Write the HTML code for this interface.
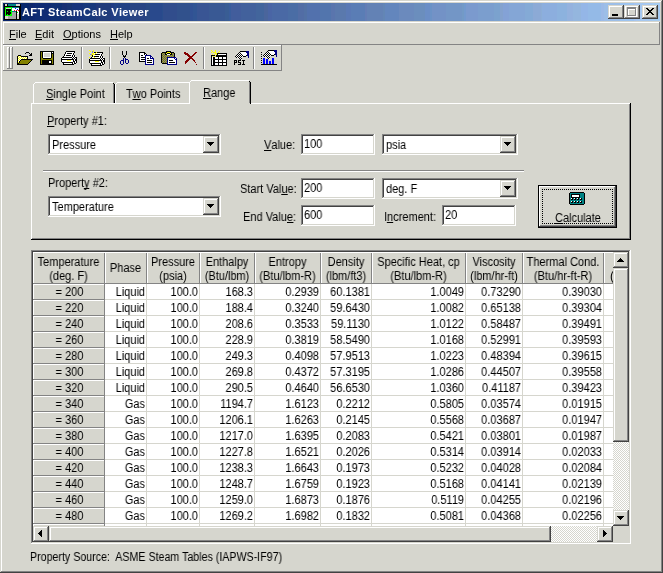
<!DOCTYPE html>
<html><head><meta charset="utf-8"><title>AFT SteamCalc Viewer</title>
<style>
html,body{margin:0;padding:0;width:663px;height:573px;overflow:hidden;background:#D6D6CE;}
body{position:relative;font-family:"Liberation Sans",sans-serif;font-size:11px;color:#000;}
div{position:absolute;box-sizing:border-box;}
.t{white-space:nowrap;line-height:13px;font-size:12px;transform:scaleX(0.917);transform-origin:0 0;}
.m{white-space:nowrap;line-height:13px;font-size:11px;}
.b{font-weight:bold;}
u{text-decoration:none;border-bottom:1px solid #000;display:inline-block;line-height:10px;}
svg{position:absolute;shape-rendering:crispEdges;}
.t,.m{will-change:transform;}
</style></head><body>

<div style="left:1px;top:1px;width:660px;height:1px;background:#FFFFFF;"></div>
<div style="left:1px;top:1px;width:1px;height:570px;background:#FFFFFF;"></div>
<div style="left:661px;top:1px;width:1px;height:571px;background:#848484;"></div>
<div style="left:1px;top:571px;width:661px;height:1px;background:#848484;"></div>
<div style="left:662px;top:0px;width:1px;height:573px;background:#424242;"></div>
<div style="left:0px;top:572px;width:663px;height:1px;background:#424242;"></div>
<div style="left:3px;top:3px;width:657px;height:18px;background:linear-gradient(to right,#08246B 0px,#08246B 16px,#08286B 16px,#08286B 26px,#10286B 26px,#10286B 30px,#102873 30px,#102873 32px,#102C73 32px,#102C73 48px,#103073 48px,#103073 59px,#183073 59px,#183073 64px,#183473 64px,#183473 69px,#18347B 69px,#18347B 80px,#18387B 80px,#18387B 93px,#21387B 93px,#21387B 95px,#213C7B 95px,#213C7B 108px,#213C84 108px,#213C84 111px,#214184 111px,#214184 127px,#294584 127px,#294584 143px,#294984 143px,#294984 147px,#29498C 147px,#29498C 159px,#294D8C 159px,#294D8C 160px,#314D8C 160px,#314D8C 174px,#31518C 174px,#31518C 187px,#315194 187px,#315194 190px,#315594 190px,#315594 194px,#395594 194px,#395594 206px,#395994 206px,#395994 222px,#395D94 222px,#395D94 226px,#395D9C 226px,#395D9C 228px,#425D9C 228px,#425D9C 238px,#42619C 238px,#42619C 253px,#42659C 253px,#42659C 261px,#4A659C 261px,#4A659C 265px,#4A65A5 265px,#4A65A5 269px,#4A69A5 269px,#4A69A5 285px,#4A6DA5 285px,#4A6DA5 295px,#526DA5 295px,#526DA5 301px,#5271A5 301px,#5271A5 304px,#5271AD 304px,#5271AD 317px,#5275AD 317px,#5275AD 328px,#5A75AD 328px,#5A75AD 332px,#5A79AD 332px,#5A79AD 343px,#5A79B5 343px,#5A79B5 348px,#5A7DB5 348px,#5A7DB5 362px,#637DB5 362px,#637DB5 364px,#6382B5 364px,#6382B5 380px,#6386B5 380px,#6386B5 382px,#6386BD 382px,#6386BD 396px,#6B8ABD 396px,#6B8ABD 411px,#6B8EBD 411px,#6B8EBD 422px,#6B8EC6 422px,#6B8EC6 427px,#6B92C6 427px,#6B92C6 429px,#7392C6 429px,#7392C6 443px,#7396C6 443px,#7396C6 459px,#739AC6 459px,#739AC6 461px,#739ACE 461px,#739ACE 463px,#7B9ACE 463px,#7B9ACE 475px,#7B9ECE 475px,#7B9ECE 491px,#7BA2CE 491px,#7BA2CE 497px,#84A2CE 497px,#84A2CE 500px,#84A2D6 500px,#84A2D6 506px,#84A6D6 506px,#84A6D6 522px,#84AAD6 522px,#84AAD6 530px,#8CAAD6 530px,#8CAAD6 538px,#8CAED6 538px,#8CAED6 539px,#8CAEDE 539px,#8CAEDE 554px,#8CB2DE 554px,#8CB2DE 564px,#94B2DE 564px,#94B2DE 570px,#94B6DE 570px,#94B6DE 578px,#94B6E7 578px,#94B6E7 585px,#94BAE7 585px,#94BAE7 598px,#9CBAE7 598px,#9CBAE7 601px,#9CBEE7 601px,#9CBEE7 617px,#9CC3EF 617px,#9CC3EF 631px,#A5C3EF 631px,#A5C3EF 633px,#A5C7EF 633px,#A5C7EF 649px,#A5CBEF 649px,#A5CBEF 656px,#A5CBF7 656px,#A5CBF7 657px);"></div>
<div style="left:20px;top:4px;width:1px;height:16px;background:#000000;"></div>
<svg style="left:4px;top:4px" width="16" height="16" viewBox="0 0 16 16"><path fill="#000000" d="M0 0h1v1h-1zM3 0h1v1h-1zM0 1h1v1h-1zM3 1h1v1h-1zM0 2h16v1h-16zM0 3h1v1h-1zM15 3h1v1h-1zM0 4h1v1h-1zM15 4h1v1h-1zM0 5h1v1h-1zM2 5h5v1h-5zM15 5h1v1h-1zM0 6h1v1h-1zM2 6h5v1h-5zM15 6h1v1h-1zM0 7h1v1h-1zM2 7h1v1h-1zM4 7h2v1h-2zM12 7h1v1h-1zM15 7h1v1h-1zM0 8h1v1h-1zM2 8h5v1h-5zM12 8h1v1h-1zM15 8h1v1h-1zM0 9h1v1h-1zM2 9h5v1h-5zM12 9h1v1h-1zM15 9h1v1h-1zM0 10h1v1h-1zM2 10h1v1h-1zM4 10h2v1h-2zM12 10h1v1h-1zM15 10h1v1h-1zM0 11h1v1h-1zM12 11h1v1h-1zM15 11h1v1h-1zM0 12h1v1h-1zM12 12h1v1h-1zM15 12h1v1h-1zM0 13h1v1h-1zM12 13h1v1h-1zM15 13h1v1h-1zM0 14h1v1h-1zM12 14h1v1h-1zM15 14h1v1h-1zM0 15h16v1h-16z"/><path fill="#D6D6CE" d="M1 0h2v1h-2zM12 0h4v1h-4zM1 1h2v1h-2zM12 1h4v1h-4zM2 4h5v1h-5zM13 10h2v1h-2zM13 11h2v1h-2zM1 12h3v1h-3zM13 12h2v1h-2zM1 13h3v1h-3zM13 13h2v1h-2zM1 14h3v1h-3zM13 14h2v1h-2z"/><path fill="#008284" d="M4 0h8v1h-8zM4 1h8v1h-8zM8 3h7v1h-7zM8 7h4v1h-4z"/><path fill="#00FF00" d="M1 3h7v1h-7zM1 4h1v1h-1zM7 4h1v1h-1zM1 5h1v1h-1zM7 5h1v1h-1zM1 6h1v1h-1zM7 6h1v1h-1zM1 7h1v1h-1zM3 7h1v1h-1zM6 7h2v1h-2zM1 8h1v1h-1zM7 8h1v1h-1zM13 8h1v1h-1zM1 9h1v1h-1zM7 9h1v1h-1zM1 10h1v1h-1zM3 10h1v1h-1zM6 10h2v1h-2zM1 11h7v1h-7z"/><path fill="#FFFFFF" d="M8 4h3v1h-3zM12 4h3v1h-3zM8 5h5v1h-5zM14 5h1v1h-1zM8 6h2v1h-2zM11 6h1v1h-1zM13 6h1v1h-1zM13 7h2v1h-2zM14 8h1v1h-1zM13 9h2v1h-2z"/><path fill="#0000FF" d="M11 4h1v1h-1zM13 5h1v1h-1z"/><path fill="#FF0000" d="M10 6h1v1h-1zM12 6h1v1h-1zM14 6h1v1h-1z"/><path fill="#A5A5A5" d="M8 8h4v1h-4zM8 9h4v1h-4zM8 10h4v1h-4zM8 11h4v1h-4zM4 12h8v1h-8zM4 13h8v1h-8zM4 14h8v1h-8z"/></svg>
<div class="m b" style="left:22px;top:6px;color:#fff;letter-spacing:0.4px;">AFT SteamCalc Viewer</div>
<div style="left:608px;top:5px;width:16px;height:14px;background:#D6D6CE;"></div>
<div style="left:608px;top:5px;width:16px;height:1px;background:#D6D6CE;"></div>
<div style="left:608px;top:5px;width:1px;height:14px;background:#D6D6CE;"></div>
<div style="left:609px;top:6px;width:14px;height:1px;background:#FFFFFF;"></div>
<div style="left:609px;top:6px;width:1px;height:12px;background:#FFFFFF;"></div>
<div style="left:609px;top:17px;width:14px;height:1px;background:#848484;"></div>
<div style="left:622px;top:6px;width:1px;height:12px;background:#848484;"></div>
<div style="left:608px;top:18px;width:16px;height:1px;background:#424242;"></div>
<div style="left:623px;top:5px;width:1px;height:14px;background:#424242;"></div>
<div style="left:612px;top:14px;width:6px;height:2px;background:#000000;"></div>
<div style="left:624px;top:5px;width:16px;height:14px;background:#D6D6CE;"></div>
<div style="left:624px;top:5px;width:16px;height:1px;background:#D6D6CE;"></div>
<div style="left:624px;top:5px;width:1px;height:14px;background:#D6D6CE;"></div>
<div style="left:625px;top:6px;width:14px;height:1px;background:#FFFFFF;"></div>
<div style="left:625px;top:6px;width:1px;height:12px;background:#FFFFFF;"></div>
<div style="left:625px;top:17px;width:14px;height:1px;background:#848484;"></div>
<div style="left:638px;top:6px;width:1px;height:12px;background:#848484;"></div>
<div style="left:624px;top:18px;width:16px;height:1px;background:#424242;"></div>
<div style="left:639px;top:5px;width:1px;height:14px;background:#424242;"></div>
<div style="left:628px;top:8px;width:9px;height:9px;border:1px solid #fff;border-top-width:2px;"></div>
<div style="left:627px;top:7px;width:9px;height:9px;border:1px solid #848484;border-top-width:2px;"></div>
<div style="left:642px;top:5px;width:16px;height:14px;background:#D6D6CE;"></div>
<div style="left:642px;top:5px;width:16px;height:1px;background:#D6D6CE;"></div>
<div style="left:642px;top:5px;width:1px;height:14px;background:#D6D6CE;"></div>
<div style="left:643px;top:6px;width:14px;height:1px;background:#FFFFFF;"></div>
<div style="left:643px;top:6px;width:1px;height:12px;background:#FFFFFF;"></div>
<div style="left:643px;top:17px;width:14px;height:1px;background:#848484;"></div>
<div style="left:656px;top:6px;width:1px;height:12px;background:#848484;"></div>
<div style="left:642px;top:18px;width:16px;height:1px;background:#424242;"></div>
<div style="left:657px;top:5px;width:1px;height:14px;background:#424242;"></div>
<svg style="left:646px;top:8px" width="8" height="7" viewBox="0 0 8 7">
<path fill="#000" d="M0 0h2v1h-2zM6 0h2v1h-2zM1 1h2v1h-2zM5 1h2v1h-2zM2 2h4v1h-4zM3 3h2v1h-2zM2 4h4v1h-4zM1 5h2v1h-2zM5 5h2v1h-2zM0 6h2v1h-2zM6 6h2v1h-2z"/>
</svg>
<div style="left:3px;top:22px;width:657px;height:1px;background:#FFFFFF;"></div>
<div style="left:3px;top:22px;width:1px;height:22px;background:#FFFFFF;"></div>
<div style="left:659px;top:22px;width:1px;height:23px;background:#848484;"></div>
<div style="left:3px;top:44px;width:657px;height:1px;background:#848484;"></div>
<div class="m" style="left:9px;top:28px;"><u>F</u>ile</div>
<div class="m" style="left:35px;top:28px;"><u>E</u>dit</div>
<div class="m" style="left:63px;top:28px;"><u>O</u>ptions</div>
<div class="m" style="left:110px;top:28px;"><u>H</u>elp</div>
<div style="left:3px;top:45px;width:279px;height:1px;background:#FFFFFF;"></div>
<div style="left:3px;top:45px;width:1px;height:26px;background:#FFFFFF;"></div>
<div style="left:281px;top:45px;width:1px;height:26px;background:#848484;"></div>
<div style="left:3px;top:70px;width:279px;height:1px;background:#848484;"></div>
<div style="left:7px;top:47px;width:1px;height:22px;background:#FFFFFF;"></div>
<div style="left:7px;top:47px;width:3px;height:1px;background:#FFFFFF;"></div>
<div style="left:9px;top:47px;width:1px;height:22px;background:#848484;"></div>
<div style="left:7px;top:68px;width:3px;height:1px;background:#848484;"></div>
<div style="left:10px;top:47px;width:1px;height:22px;background:#FFFFFF;"></div>
<div style="left:10px;top:47px;width:3px;height:1px;background:#FFFFFF;"></div>
<div style="left:12px;top:47px;width:1px;height:22px;background:#848484;"></div>
<div style="left:10px;top:68px;width:3px;height:1px;background:#848484;"></div>
<div style="left:81px;top:47px;width:1px;height:22px;background:#848484;"></div>
<div style="left:82px;top:47px;width:1px;height:22px;background:#FFFFFF;"></div>
<div style="left:109px;top:47px;width:1px;height:22px;background:#848484;"></div>
<div style="left:110px;top:47px;width:1px;height:22px;background:#FFFFFF;"></div>
<div style="left:203px;top:47px;width:1px;height:22px;background:#848484;"></div>
<div style="left:204px;top:47px;width:1px;height:22px;background:#FFFFFF;"></div>
<div style="left:253px;top:47px;width:1px;height:22px;background:#848484;"></div>
<div style="left:254px;top:47px;width:1px;height:22px;background:#FFFFFF;"></div>
<svg style="left:15px;top:48px" width="20" height="17" viewBox="0 0 20 17"><path fill="#000000" d="M11 4h3v1h-3zM10 5h1v1h-1zM14 5h1v1h-1zM16 5h1v1h-1zM15 6h2v1h-2zM3 7h3v1h-3zM14 7h3v1h-3zM2 8h1v1h-1zM6 8h7v1h-7zM2 9h1v1h-1zM12 9h1v1h-1zM2 10h1v1h-1zM12 10h1v1h-1zM2 11h1v1h-1zM6 11h12v1h-12zM2 12h1v1h-1zM5 12h1v1h-1zM16 12h1v1h-1zM2 13h1v1h-1zM4 13h1v1h-1zM15 13h1v1h-1zM2 14h1v1h-1zM4 14h1v1h-1zM14 14h1v1h-1zM2 15h2v1h-2zM13 15h1v1h-1zM2 16h11v1h-11z"/><path fill="#FFFF00" d="M3 8h1v1h-1zM5 8h1v1h-1zM4 9h1v1h-1zM6 9h1v1h-1zM8 9h1v1h-1zM10 9h1v1h-1zM3 10h1v1h-1zM5 10h1v1h-1zM7 10h1v1h-1zM9 10h1v1h-1zM11 10h1v1h-1zM4 11h1v1h-1zM3 12h1v1h-1zM3 14h1v1h-1z"/><path fill="#FFFFFF" d="M4 8h1v1h-1zM3 9h1v1h-1zM5 9h1v1h-1zM7 9h1v1h-1zM9 9h1v1h-1zM11 9h1v1h-1zM4 10h1v1h-1zM6 10h1v1h-1zM8 10h1v1h-1zM10 10h1v1h-1zM3 11h1v1h-1zM5 11h1v1h-1zM4 12h1v1h-1zM3 13h1v1h-1z"/><path fill="#848200" d="M6 12h10v1h-10zM5 13h10v1h-10zM5 14h9v1h-9zM4 15h9v1h-9z"/></svg>
<svg style="left:38px;top:48px" width="20" height="17" viewBox="0 0 20 17"><path fill="#000000" d="M2 3h14v1h-14zM2 4h1v1h-1zM4 4h1v1h-1zM13 4h1v1h-1zM15 4h1v1h-1zM2 5h1v1h-1zM4 5h1v1h-1zM13 5h3v1h-3zM2 6h1v1h-1zM4 6h1v1h-1zM13 6h1v1h-1zM15 6h1v1h-1zM2 7h1v1h-1zM4 7h1v1h-1zM13 7h1v1h-1zM15 7h1v1h-1zM2 8h1v1h-1zM4 8h1v1h-1zM13 8h1v1h-1zM15 8h1v1h-1zM2 9h1v1h-1zM4 9h1v1h-1zM13 9h1v1h-1zM15 9h1v1h-1zM2 10h1v1h-1zM5 10h8v1h-8zM15 10h1v1h-1zM2 11h1v1h-1zM15 11h1v1h-1zM2 12h1v1h-1zM4 12h10v1h-10zM15 12h1v1h-1zM2 13h1v1h-1zM4 13h7v1h-7zM13 13h1v1h-1zM15 13h1v1h-1zM2 14h1v1h-1zM4 14h7v1h-7zM13 14h1v1h-1zM15 14h1v1h-1zM2 15h1v1h-1zM4 15h10v1h-10zM15 15h1v1h-1zM2 16h14v1h-14z"/><path fill="#848200" d="M3 4h1v1h-1zM3 5h1v1h-1zM3 6h1v1h-1zM14 6h1v1h-1zM3 7h1v1h-1zM14 7h1v1h-1zM3 8h1v1h-1zM14 8h1v1h-1zM3 9h1v1h-1zM14 9h1v1h-1zM3 10h2v1h-2zM13 10h2v1h-2zM3 11h12v1h-12zM3 12h1v1h-1zM14 12h1v1h-1zM3 13h1v1h-1zM14 13h1v1h-1zM3 14h1v1h-1zM14 14h1v1h-1zM3 15h1v1h-1zM14 15h1v1h-1z"/><path fill="#FFFFFF" d="M5 4h8v1h-8zM14 4h1v1h-1zM5 5h1v1h-1zM12 5h1v1h-1zM5 6h1v1h-1zM12 6h1v1h-1zM5 7h1v1h-1zM12 7h1v1h-1zM5 8h1v1h-1zM12 8h1v1h-1zM5 9h8v1h-8zM11 13h2v1h-2zM11 14h2v1h-2z"/><path fill="#D6D6CE" d="M6 5h6v1h-6zM6 6h6v1h-6zM6 7h6v1h-6zM6 8h6v1h-6z"/></svg>
<svg style="left:61px;top:51px" width="16" height="14" viewBox="0 0 16 14"><path fill="#000000" d="M5 0h9v1h-9zM4 1h1v1h-1zM13 1h1v1h-1zM4 2h1v1h-1zM6 2h5v1h-5zM12 2h1v1h-1zM3 3h1v1h-1zM12 3h1v1h-1zM3 4h1v1h-1zM5 4h5v1h-5zM11 4h1v1h-1zM13 4h1v1h-1zM2 5h1v1h-1zM11 5h1v1h-1zM13 5h1v1h-1zM1 6h10v1h-10zM12 6h1v1h-1zM14 6h2v1h-2zM0 7h1v1h-1zM11 7h1v1h-1zM13 7h1v1h-1zM15 7h1v1h-1zM0 8h13v1h-13zM14 8h2v1h-2zM0 9h1v1h-1zM12 9h1v1h-1zM14 9h2v1h-2zM0 10h1v1h-1zM12 10h2v1h-2zM15 10h1v1h-1zM1 11h11v1h-11zM13 11h1v1h-1zM15 11h1v1h-1zM2 12h1v1h-1zM11 12h1v1h-1zM13 12h2v1h-2zM2 13h11v1h-11z"/><path fill="#FFFFFF" d="M5 1h8v1h-8zM5 2h1v1h-1zM11 2h1v1h-1zM4 3h8v1h-8zM4 4h1v1h-1zM10 4h1v1h-1zM12 4h1v1h-1zM3 5h8v1h-8zM12 5h1v1h-1zM14 5h1v1h-1zM11 6h1v1h-1zM13 6h1v1h-1zM1 7h10v1h-10zM12 7h1v1h-1zM14 7h1v1h-1zM13 8h1v1h-1zM1 9h5v1h-5zM10 9h2v1h-2zM13 9h1v1h-1zM1 10h11v1h-11zM14 10h1v1h-1zM12 11h1v1h-1zM14 11h1v1h-1zM3 12h8v1h-8zM12 12h1v1h-1z"/><path fill="#FFFF00" d="M6 9h4v1h-4z"/></svg>
<svg style="left:89px;top:52px" width="16" height="14" viewBox="0 0 16 14"><path fill="#000000" d="M5 0h9v1h-9zM4 1h1v1h-1zM13 1h1v1h-1zM4 2h1v1h-1zM6 2h5v1h-5zM12 2h1v1h-1zM3 3h1v1h-1zM12 3h1v1h-1zM3 4h1v1h-1zM5 4h5v1h-5zM11 4h1v1h-1zM13 4h1v1h-1zM2 5h1v1h-1zM11 5h1v1h-1zM13 5h1v1h-1zM1 6h10v1h-10zM12 6h1v1h-1zM14 6h2v1h-2zM0 7h1v1h-1zM11 7h1v1h-1zM13 7h1v1h-1zM15 7h1v1h-1zM0 8h13v1h-13zM14 8h2v1h-2zM0 9h1v1h-1zM12 9h1v1h-1zM14 9h2v1h-2zM0 10h1v1h-1zM12 10h2v1h-2zM15 10h1v1h-1zM1 11h11v1h-11zM13 11h1v1h-1zM15 11h1v1h-1zM2 12h1v1h-1zM11 12h1v1h-1zM13 12h2v1h-2zM2 13h11v1h-11z"/><path fill="#FFFFFF" d="M5 1h8v1h-8zM5 2h1v1h-1zM11 2h1v1h-1zM4 3h8v1h-8zM4 4h1v1h-1zM10 4h1v1h-1zM12 4h1v1h-1zM3 5h8v1h-8zM12 5h1v1h-1zM14 5h1v1h-1zM11 6h1v1h-1zM13 6h1v1h-1zM1 7h10v1h-10zM12 7h1v1h-1zM14 7h1v1h-1zM13 8h1v1h-1zM1 9h5v1h-5zM10 9h2v1h-2zM13 9h1v1h-1zM1 10h11v1h-11zM14 10h1v1h-1zM12 11h1v1h-1zM14 11h1v1h-1zM3 12h8v1h-8zM12 12h1v1h-1z"/><path fill="#FFFF00" d="M6 9h4v1h-4z"/></svg>
<svg style="left:89px;top:50px" width="8" height="8" viewBox="0 0 8 8"><path fill="#FFFF00" d="M0 0h1v1h-1zM4 0h1v1h-1zM1 1h1v1h-1zM4 1h1v1h-1zM7 2h1v1h-1zM0 3h1v1h-1zM3 3h2v1h-2zM6 3h1v1h-1zM3 4h3v1h-3zM2 5h1v1h-1zM4 6h1v1h-1zM0 7h1v1h-1zM5 7h1v1h-1z"/><path fill="#8486C6" d="M3 1h1v1h-1zM3 2h1v1h-1zM1 4h2v1h-2z"/></svg>
<svg style="left:116px;top:50px" width="16" height="15" viewBox="0 0 16 15"><path fill="#000000" d="M6 1h1v1h-1zM10 1h1v1h-1zM6 2h1v1h-1zM10 2h1v1h-1zM6 3h1v1h-1zM10 3h1v1h-1zM6 4h1v1h-1zM10 4h1v1h-1zM7 5h1v1h-1zM9 5h1v1h-1zM7 6h3v1h-3zM8 7h1v1h-1z"/><path fill="#000084" d="M7 8h1v1h-1zM9 8h1v1h-1zM7 9h1v1h-1zM9 9h3v1h-3zM5 10h3v1h-3zM9 10h1v1h-1zM12 10h1v1h-1zM4 11h1v1h-1zM7 11h1v1h-1zM9 11h1v1h-1zM12 11h1v1h-1zM4 12h1v1h-1zM7 12h1v1h-1zM9 12h1v1h-1zM12 12h1v1h-1zM4 13h1v1h-1zM7 13h1v1h-1zM10 13h2v1h-2zM5 14h2v1h-2z"/></svg>
<svg style="left:137px;top:48px" width="20" height="17" viewBox="0 0 20 17"><path fill="#000000" d="M2 4h6v1h-6zM2 5h1v1h-1zM7 5h2v1h-2zM2 6h1v1h-1zM7 6h1v1h-1zM9 6h1v1h-1zM2 7h1v1h-1zM4 7h2v1h-2zM2 8h1v1h-1zM2 9h1v1h-1zM4 9h4v1h-4zM2 10h1v1h-1zM10 10h2v1h-2zM2 11h1v1h-1zM4 11h4v1h-4zM2 12h1v1h-1zM10 12h5v1h-5zM2 13h6v1h-6zM10 14h5v1h-5z"/><path fill="#FFFFFF" d="M3 5h4v1h-4zM3 6h4v1h-4zM8 6h1v1h-1zM3 7h1v1h-1zM6 7h2v1h-2zM3 8h5v1h-5zM9 8h4v1h-4zM3 9h1v1h-1zM9 9h4v1h-4zM14 9h1v1h-1zM3 10h5v1h-5zM9 10h1v1h-1zM12 10h1v1h-1zM3 11h1v1h-1zM9 11h7v1h-7zM3 12h5v1h-5zM9 12h1v1h-1zM15 12h1v1h-1zM9 13h7v1h-7zM9 14h1v1h-1zM15 14h1v1h-1zM9 15h7v1h-7z"/><path fill="#000084" d="M8 7h6v1h-6zM8 8h1v1h-1zM13 8h2v1h-2zM8 9h1v1h-1zM13 9h1v1h-1zM15 9h1v1h-1zM8 10h1v1h-1zM13 10h4v1h-4zM8 11h1v1h-1zM16 11h1v1h-1zM8 12h1v1h-1zM16 12h1v1h-1zM8 13h1v1h-1zM16 13h1v1h-1zM8 14h1v1h-1zM16 14h1v1h-1zM8 15h1v1h-1zM16 15h1v1h-1zM8 16h9v1h-9z"/></svg>
<svg style="left:159px;top:48px" width="20" height="17" viewBox="0 0 20 17"><path fill="#000000" d="M7 3h5v1h-5zM3 4h5v1h-5zM11 4h4v1h-4zM2 5h1v1h-1zM6 5h1v1h-1zM8 5h3v1h-3zM12 5h1v1h-1zM15 5h1v1h-1zM2 6h1v1h-1zM6 6h2v1h-2zM11 6h2v1h-2zM15 6h1v1h-1zM2 7h1v1h-1zM15 7h1v1h-1zM2 8h1v1h-1zM15 8h1v1h-1zM2 9h1v1h-1zM2 10h1v1h-1zM2 11h1v1h-1zM2 12h1v1h-1zM10 12h4v1h-4zM2 13h1v1h-1zM2 14h1v1h-1zM10 14h6v1h-6zM3 15h5v1h-5z"/><path fill="#FFFF00" d="M8 4h3v1h-3zM7 5h1v1h-1zM11 5h1v1h-1z"/><path fill="#848200" d="M3 5h1v1h-1zM5 5h1v1h-1zM14 5h1v1h-1zM4 6h1v1h-1zM13 6h1v1h-1zM3 7h1v1h-1zM5 7h1v1h-1zM7 7h1v1h-1zM9 7h1v1h-1zM11 7h1v1h-1zM13 7h1v1h-1zM4 8h1v1h-1zM6 8h1v1h-1zM8 8h1v1h-1zM10 8h1v1h-1zM12 8h1v1h-1zM14 8h1v1h-1zM3 9h1v1h-1zM5 9h1v1h-1zM7 9h1v1h-1zM4 10h1v1h-1zM6 10h1v1h-1zM3 11h1v1h-1zM5 11h1v1h-1zM7 11h1v1h-1zM4 12h1v1h-1zM6 12h1v1h-1zM3 13h1v1h-1zM5 13h1v1h-1zM7 13h1v1h-1zM4 14h1v1h-1zM6 14h1v1h-1z"/><path fill="#848484" d="M4 5h1v1h-1zM13 5h1v1h-1zM3 6h1v1h-1zM5 6h1v1h-1zM14 6h1v1h-1zM4 7h1v1h-1zM6 7h1v1h-1zM8 7h1v1h-1zM10 7h1v1h-1zM12 7h1v1h-1zM14 7h1v1h-1zM3 8h1v1h-1zM5 8h1v1h-1zM7 8h1v1h-1zM9 8h1v1h-1zM11 8h1v1h-1zM13 8h1v1h-1zM4 9h1v1h-1zM6 9h1v1h-1zM3 10h1v1h-1zM5 10h1v1h-1zM7 10h1v1h-1zM4 11h1v1h-1zM6 11h1v1h-1zM3 12h1v1h-1zM5 12h1v1h-1zM7 12h1v1h-1zM4 13h1v1h-1zM6 13h1v1h-1zM3 14h1v1h-1zM5 14h1v1h-1zM7 14h1v1h-1z"/><path fill="#FFFFFF" d="M8 6h3v1h-3zM9 10h6v1h-6zM16 10h1v1h-1zM9 11h7v1h-7zM9 12h1v1h-1zM14 12h3v1h-3zM9 13h8v1h-8zM9 14h1v1h-1zM16 14h1v1h-1zM9 15h8v1h-8z"/><path fill="#000084" d="M8 9h9v1h-9zM8 10h1v1h-1zM15 10h1v1h-1zM17 10h1v1h-1zM8 11h1v1h-1zM16 11h2v1h-2zM8 12h1v1h-1zM17 12h1v1h-1zM8 13h1v1h-1zM17 13h1v1h-1zM8 14h1v1h-1zM17 14h1v1h-1zM8 15h1v1h-1zM17 15h1v1h-1zM8 16h10v1h-10z"/></svg>
<svg style="left:182px;top:48px" width="20" height="17" viewBox="0 0 20 17"><path fill="#840000" d="M2 4h2v1h-2zM13 4h2v1h-2zM2 5h4v1h-4zM12 5h2v1h-2zM3 6h4v1h-4zM11 6h2v1h-2zM5 7h3v1h-3zM10 7h2v1h-2zM6 8h5v1h-5zM7 9h3v1h-3zM6 10h5v1h-5zM5 11h3v1h-3zM10 11h2v1h-2zM4 12h3v1h-3zM11 12h2v1h-2zM3 13h3v1h-3zM12 13h1v1h-1zM3 14h2v1h-2zM13 14h1v1h-1zM3 15h1v1h-1zM14 16h1v1h-1z"/></svg>
<svg style="left:209px;top:48px" width="20" height="18" viewBox="0 0 20 18"><path fill="#FFFF00" d="M2 2h1v1h-1zM6 2h1v1h-1zM3 3h1v1h-1zM6 3h1v1h-1zM10 3h1v1h-1zM2 4h1v1h-1zM4 4h3v1h-3zM9 4h1v1h-1zM6 5h2v1h-2zM3 6h1v1h-1zM5 6h1v1h-1zM7 6h1v1h-1zM4 8h1v1h-1zM6 8h1v1h-1z"/><path fill="#000000" d="M8 5h10v1h-10zM8 6h1v1h-1zM17 6h1v1h-1zM2 7h4v1h-4zM7 7h11v1h-11zM2 8h1v1h-1zM7 8h11v1h-11zM2 9h1v1h-1zM4 9h2v1h-2zM9 9h1v1h-1zM13 9h1v1h-1zM17 9h1v1h-1zM2 10h1v1h-1zM4 10h2v1h-2zM9 10h1v1h-1zM13 10h1v1h-1zM17 10h1v1h-1zM2 11h1v1h-1zM4 11h14v1h-14zM2 12h1v1h-1zM4 12h2v1h-2zM9 12h1v1h-1zM13 12h1v1h-1zM17 12h1v1h-1zM2 13h1v1h-1zM4 13h2v1h-2zM9 13h1v1h-1zM13 13h1v1h-1zM17 13h1v1h-1zM2 14h1v1h-1zM4 14h14v1h-14zM2 15h1v1h-1zM4 15h2v1h-2zM9 15h1v1h-1zM13 15h1v1h-1zM17 15h1v1h-1zM2 16h1v1h-1zM4 16h2v1h-2zM9 16h1v1h-1zM13 16h1v1h-1zM17 16h1v1h-1zM2 17h16v1h-16z"/><path fill="#FFFFFF" d="M9 6h8v1h-8zM3 9h1v1h-1zM6 9h3v1h-3zM10 9h3v1h-3zM14 9h3v1h-3zM3 10h1v1h-1zM6 10h3v1h-3zM10 10h3v1h-3zM14 10h3v1h-3zM3 11h1v1h-1zM3 12h1v1h-1zM6 12h3v1h-3zM10 12h3v1h-3zM14 12h3v1h-3zM3 13h1v1h-1zM6 13h3v1h-3zM10 13h3v1h-3zM14 13h3v1h-3zM3 14h1v1h-1zM3 15h1v1h-1zM6 15h3v1h-3zM10 15h3v1h-3zM14 15h3v1h-3zM3 16h1v1h-1zM6 16h3v1h-3zM10 16h3v1h-3zM14 16h3v1h-3z"/></svg>
<svg style="left:232px;top:51px" width="20" height="12" viewBox="0 0 20 12"><path fill="#000000" d="M8 0h6v1h-6zM7 1h1v1h-1zM6 2h1v1h-1zM8 2h1v1h-1zM5 3h1v1h-1zM7 3h1v1h-1zM9 3h1v1h-1zM4 4h1v1h-1zM6 4h1v1h-1zM8 4h1v1h-1zM10 4h1v1h-1zM14 4h1v1h-1zM3 5h1v1h-1zM5 5h1v1h-1zM7 5h1v1h-1zM9 5h1v1h-1zM11 5h3v1h-3zM4 6h1v1h-1zM6 6h1v1h-1zM8 6h1v1h-1zM7 7h1v1h-1zM9 7h1v1h-1zM8 8h1v1h-1z"/><path fill="#000084" d="M14 0h3v1h-3zM14 1h3v1h-3zM15 2h2v1h-2zM15 3h2v1h-2zM15 4h2v1h-2zM16 5h1v1h-1zM16 6h1v1h-1z"/><path fill="#FFFFFF" d="M9 1h5v1h-5zM7 2h1v1h-1zM9 2h6v1h-6zM6 3h1v1h-1zM8 3h1v1h-1zM10 3h5v1h-5zM5 4h1v1h-1zM7 4h1v1h-1zM9 4h1v1h-1zM11 4h3v1h-3zM4 5h1v1h-1zM6 5h1v1h-1zM8 5h1v1h-1zM10 5h1v1h-1zM5 6h1v1h-1zM7 6h1v1h-1zM9 6h1v1h-1zM6 7h1v1h-1zM8 7h1v1h-1zM9 8h1v1h-1z"/></svg>
<svg style="left:232px;top:48px" width="20" height="17" viewBox="0 0 20 17"><path fill="#000000" d="M2 12h3v1h-3zM6 12h3v1h-3zM10 12h3v1h-3zM2 13h1v1h-1zM4 13h1v1h-1zM6 13h1v1h-1zM11 13h1v1h-1zM2 14h3v1h-3zM6 14h3v1h-3zM11 14h1v1h-1zM2 15h1v1h-1zM8 15h1v1h-1zM11 15h1v1h-1zM2 16h1v1h-1zM6 16h3v1h-3zM10 16h3v1h-3z"/></svg>
<svg style="left:260px;top:50px" width="20" height="12" viewBox="0 0 20 12"><path fill="#000000" d="M8 0h6v1h-6zM7 1h1v1h-1zM6 2h1v1h-1zM8 2h1v1h-1zM5 3h1v1h-1zM7 3h1v1h-1zM9 3h1v1h-1zM4 4h1v1h-1zM6 4h1v1h-1zM8 4h1v1h-1zM10 4h1v1h-1zM14 4h1v1h-1zM3 5h1v1h-1zM5 5h1v1h-1zM7 5h1v1h-1zM9 5h1v1h-1zM11 5h3v1h-3zM4 6h1v1h-1zM6 6h1v1h-1zM8 6h1v1h-1zM7 7h1v1h-1zM9 7h1v1h-1zM8 8h1v1h-1z"/><path fill="#000084" d="M14 0h3v1h-3zM14 1h3v1h-3zM15 2h2v1h-2zM15 3h2v1h-2zM15 4h2v1h-2zM16 5h1v1h-1zM16 6h1v1h-1z"/><path fill="#FFFFFF" d="M9 1h5v1h-5zM7 2h1v1h-1zM9 2h6v1h-6zM6 3h1v1h-1zM8 3h1v1h-1zM10 3h5v1h-5zM5 4h1v1h-1zM7 4h1v1h-1zM9 4h1v1h-1zM11 4h3v1h-3zM4 5h1v1h-1zM6 5h1v1h-1zM8 5h1v1h-1zM10 5h1v1h-1zM5 6h1v1h-1zM7 6h1v1h-1zM9 6h1v1h-1zM6 7h1v1h-1zM8 7h1v1h-1zM9 8h1v1h-1z"/></svg>
<svg style="left:258px;top:48px" width="20" height="17" viewBox="0 0 20 17"><path fill="#000000" d="M3 4h1v1h-1zM3 6h1v1h-1zM3 8h1v1h-1zM3 10h1v1h-1zM3 12h1v1h-1zM3 14h1v1h-1zM3 16h16v1h-16z"/><path fill="#0000FF" d="M5 10h2v1h-2zM14 10h2v1h-2zM5 11h2v1h-2zM8 11h2v1h-2zM14 11h2v1h-2zM5 12h2v1h-2zM8 12h2v1h-2zM14 12h2v1h-2zM5 13h2v1h-2zM8 13h2v1h-2zM11 13h2v1h-2zM14 13h2v1h-2zM5 14h2v1h-2zM8 14h2v1h-2zM11 14h2v1h-2zM14 14h2v1h-2zM5 15h2v1h-2zM8 15h2v1h-2zM11 15h2v1h-2zM14 15h2v1h-2z"/></svg>
<div style="left:33px;top:84px;width:1px;height:20px;background:#FFFFFF;"></div>
<div style="left:34px;top:83px;width:1px;height:1px;background:#FFFFFF;"></div>
<div style="left:35px;top:82px;width:78px;height:1px;background:#FFFFFF;"></div>
<div style="left:113px;top:83px;width:1px;height:1px;background:#000000;"></div>
<div style="left:114px;top:84px;width:1px;height:19px;background:#000000;"></div>
<div style="left:113px;top:84px;width:1px;height:19px;background:#848484;"></div>
<div style="left:115px;top:84px;width:1px;height:20px;background:#FFFFFF;"></div>
<div style="left:116px;top:83px;width:1px;height:1px;background:#FFFFFF;"></div>
<div style="left:117px;top:82px;width:72px;height:1px;background:#FFFFFF;"></div>
<div style="left:31px;top:103px;width:159px;height:1px;background:#FFFFFF;"></div>
<div style="left:251px;top:103px;width:379px;height:1px;background:#FFFFFF;"></div>
<div style="left:31px;top:103px;width:1px;height:136px;background:#FFFFFF;"></div>
<div style="left:629px;top:104px;width:1px;height:135px;background:#848484;"></div>
<div style="left:630px;top:103px;width:1px;height:137px;background:#000000;"></div>
<div style="left:32px;top:238px;width:598px;height:1px;background:#848484;"></div>
<div style="left:31px;top:239px;width:600px;height:1px;background:#000000;"></div>
<div style="left:189px;top:82px;width:1px;height:22px;background:#FFFFFF;"></div>
<div style="left:190px;top:81px;width:1px;height:1px;background:#FFFFFF;"></div>
<div style="left:191px;top:80px;width:58px;height:1px;background:#FFFFFF;"></div>
<div style="left:249px;top:81px;width:1px;height:1px;background:#000000;"></div>
<div style="left:250px;top:82px;width:1px;height:22px;background:#000000;"></div>
<div style="left:249px;top:82px;width:1px;height:21px;background:#848484;"></div>
<div class="t" style="left:46px;top:88px;"><u>S</u>ingle Point</div>
<div class="t" style="left:126px;top:88px;">T<u>w</u>o Points</div>
<div class="t" style="left:203px;top:87px;"><u>R</u>ange</div>
<div class="t" style="left:47px;top:115px;"><u>P</u>roperty #1:</div>
<div style="left:48px;top:134px;width:173px;height:21px;background:#FFFFFF;"></div>
<div style="left:48px;top:134px;width:173px;height:1px;background:#848484;"></div>
<div style="left:48px;top:134px;width:1px;height:21px;background:#848484;"></div>
<div style="left:49px;top:135px;width:171px;height:1px;background:#424242;"></div>
<div style="left:49px;top:135px;width:1px;height:19px;background:#424242;"></div>
<div style="left:49px;top:153px;width:171px;height:1px;background:#D6D6CE;"></div>
<div style="left:219px;top:135px;width:1px;height:19px;background:#D6D6CE;"></div>
<div style="left:48px;top:154px;width:173px;height:1px;background:#FFFFFF;"></div>
<div style="left:220px;top:134px;width:1px;height:21px;background:#FFFFFF;"></div>
<div style="left:203px;top:136px;width:16px;height:17px;background:#D6D6CE;"></div>
<div style="left:203px;top:136px;width:16px;height:1px;background:#D6D6CE;"></div>
<div style="left:203px;top:136px;width:1px;height:17px;background:#D6D6CE;"></div>
<div style="left:204px;top:137px;width:14px;height:1px;background:#FFFFFF;"></div>
<div style="left:204px;top:137px;width:1px;height:15px;background:#FFFFFF;"></div>
<div style="left:204px;top:151px;width:14px;height:1px;background:#848484;"></div>
<div style="left:217px;top:137px;width:1px;height:15px;background:#848484;"></div>
<div style="left:203px;top:152px;width:16px;height:1px;background:#424242;"></div>
<div style="left:218px;top:136px;width:1px;height:17px;background:#424242;"></div>
<svg style="left:207px;top:142px" width="7" height="4" viewBox="0 0 7 4"><path fill="#000" d="M0 0h7v1h-7zM1 1h5v1h-5zM2 2h3v1h-3zM3 3h1v1h-1z"/></svg>
<div class="t" style="left:52px;top:139px;">Pressure</div>
<div class="t" style="left:264px;top:139px;"><u>V</u>alue:</div>
<div style="left:301px;top:134px;width:74px;height:21px;background:#FFFFFF;"></div>
<div style="left:301px;top:134px;width:74px;height:1px;background:#848484;"></div>
<div style="left:301px;top:134px;width:1px;height:21px;background:#848484;"></div>
<div style="left:302px;top:135px;width:72px;height:1px;background:#424242;"></div>
<div style="left:302px;top:135px;width:1px;height:19px;background:#424242;"></div>
<div style="left:302px;top:153px;width:72px;height:1px;background:#D6D6CE;"></div>
<div style="left:373px;top:135px;width:1px;height:19px;background:#D6D6CE;"></div>
<div style="left:301px;top:154px;width:74px;height:1px;background:#FFFFFF;"></div>
<div style="left:374px;top:134px;width:1px;height:21px;background:#FFFFFF;"></div>
<div class="t" style="left:304px;top:138px;">100</div>
<div style="left:382px;top:134px;width:136px;height:21px;background:#FFFFFF;"></div>
<div style="left:382px;top:134px;width:136px;height:1px;background:#848484;"></div>
<div style="left:382px;top:134px;width:1px;height:21px;background:#848484;"></div>
<div style="left:383px;top:135px;width:134px;height:1px;background:#424242;"></div>
<div style="left:383px;top:135px;width:1px;height:19px;background:#424242;"></div>
<div style="left:383px;top:153px;width:134px;height:1px;background:#D6D6CE;"></div>
<div style="left:516px;top:135px;width:1px;height:19px;background:#D6D6CE;"></div>
<div style="left:382px;top:154px;width:136px;height:1px;background:#FFFFFF;"></div>
<div style="left:517px;top:134px;width:1px;height:21px;background:#FFFFFF;"></div>
<div style="left:500px;top:136px;width:16px;height:17px;background:#D6D6CE;"></div>
<div style="left:500px;top:136px;width:16px;height:1px;background:#D6D6CE;"></div>
<div style="left:500px;top:136px;width:1px;height:17px;background:#D6D6CE;"></div>
<div style="left:501px;top:137px;width:14px;height:1px;background:#FFFFFF;"></div>
<div style="left:501px;top:137px;width:1px;height:15px;background:#FFFFFF;"></div>
<div style="left:501px;top:151px;width:14px;height:1px;background:#848484;"></div>
<div style="left:514px;top:137px;width:1px;height:15px;background:#848484;"></div>
<div style="left:500px;top:152px;width:16px;height:1px;background:#424242;"></div>
<div style="left:515px;top:136px;width:1px;height:17px;background:#424242;"></div>
<svg style="left:504px;top:142px" width="7" height="4" viewBox="0 0 7 4"><path fill="#000" d="M0 0h7v1h-7zM1 1h5v1h-5zM2 2h3v1h-3zM3 3h1v1h-1z"/></svg>
<div class="t" style="left:386px;top:139px;">psia</div>
<div style="left:43px;top:170px;width:481px;height:1px;background:#848484;"></div>
<div style="left:43px;top:171px;width:481px;height:1px;background:#FFFFFF;"></div>
<div class="t" style="left:48px;top:177px;">Propert<u>y</u> #2:</div>
<div style="left:48px;top:196px;width:173px;height:21px;background:#FFFFFF;"></div>
<div style="left:48px;top:196px;width:173px;height:1px;background:#848484;"></div>
<div style="left:48px;top:196px;width:1px;height:21px;background:#848484;"></div>
<div style="left:49px;top:197px;width:171px;height:1px;background:#424242;"></div>
<div style="left:49px;top:197px;width:1px;height:19px;background:#424242;"></div>
<div style="left:49px;top:215px;width:171px;height:1px;background:#D6D6CE;"></div>
<div style="left:219px;top:197px;width:1px;height:19px;background:#D6D6CE;"></div>
<div style="left:48px;top:216px;width:173px;height:1px;background:#FFFFFF;"></div>
<div style="left:220px;top:196px;width:1px;height:21px;background:#FFFFFF;"></div>
<div style="left:203px;top:198px;width:16px;height:17px;background:#D6D6CE;"></div>
<div style="left:203px;top:198px;width:16px;height:1px;background:#D6D6CE;"></div>
<div style="left:203px;top:198px;width:1px;height:17px;background:#D6D6CE;"></div>
<div style="left:204px;top:199px;width:14px;height:1px;background:#FFFFFF;"></div>
<div style="left:204px;top:199px;width:1px;height:15px;background:#FFFFFF;"></div>
<div style="left:204px;top:213px;width:14px;height:1px;background:#848484;"></div>
<div style="left:217px;top:199px;width:1px;height:15px;background:#848484;"></div>
<div style="left:203px;top:214px;width:16px;height:1px;background:#424242;"></div>
<div style="left:218px;top:198px;width:1px;height:17px;background:#424242;"></div>
<svg style="left:207px;top:204px" width="7" height="4" viewBox="0 0 7 4"><path fill="#000" d="M0 0h7v1h-7zM1 1h5v1h-5zM2 2h3v1h-3zM3 3h1v1h-1z"/></svg>
<div class="t" style="left:52px;top:201px;">Temperature</div>
<div class="t" style="left:240px;top:183px;">Start Val<u>u</u>e:</div>
<div style="left:301px;top:178px;width:74px;height:21px;background:#FFFFFF;"></div>
<div style="left:301px;top:178px;width:74px;height:1px;background:#848484;"></div>
<div style="left:301px;top:178px;width:1px;height:21px;background:#848484;"></div>
<div style="left:302px;top:179px;width:72px;height:1px;background:#424242;"></div>
<div style="left:302px;top:179px;width:1px;height:19px;background:#424242;"></div>
<div style="left:302px;top:197px;width:72px;height:1px;background:#D6D6CE;"></div>
<div style="left:373px;top:179px;width:1px;height:19px;background:#D6D6CE;"></div>
<div style="left:301px;top:198px;width:74px;height:1px;background:#FFFFFF;"></div>
<div style="left:374px;top:178px;width:1px;height:21px;background:#FFFFFF;"></div>
<div class="t" style="left:304px;top:182px;">200</div>
<div style="left:382px;top:178px;width:136px;height:21px;background:#FFFFFF;"></div>
<div style="left:382px;top:178px;width:136px;height:1px;background:#848484;"></div>
<div style="left:382px;top:178px;width:1px;height:21px;background:#848484;"></div>
<div style="left:383px;top:179px;width:134px;height:1px;background:#424242;"></div>
<div style="left:383px;top:179px;width:1px;height:19px;background:#424242;"></div>
<div style="left:383px;top:197px;width:134px;height:1px;background:#D6D6CE;"></div>
<div style="left:516px;top:179px;width:1px;height:19px;background:#D6D6CE;"></div>
<div style="left:382px;top:198px;width:136px;height:1px;background:#FFFFFF;"></div>
<div style="left:517px;top:178px;width:1px;height:21px;background:#FFFFFF;"></div>
<div style="left:500px;top:180px;width:16px;height:17px;background:#D6D6CE;"></div>
<div style="left:500px;top:180px;width:16px;height:1px;background:#D6D6CE;"></div>
<div style="left:500px;top:180px;width:1px;height:17px;background:#D6D6CE;"></div>
<div style="left:501px;top:181px;width:14px;height:1px;background:#FFFFFF;"></div>
<div style="left:501px;top:181px;width:1px;height:15px;background:#FFFFFF;"></div>
<div style="left:501px;top:195px;width:14px;height:1px;background:#848484;"></div>
<div style="left:514px;top:181px;width:1px;height:15px;background:#848484;"></div>
<div style="left:500px;top:196px;width:16px;height:1px;background:#424242;"></div>
<div style="left:515px;top:180px;width:1px;height:17px;background:#424242;"></div>
<svg style="left:504px;top:186px" width="7" height="4" viewBox="0 0 7 4"><path fill="#000" d="M0 0h7v1h-7zM1 1h5v1h-5zM2 2h3v1h-3zM3 3h1v1h-1z"/></svg>
<div class="t" style="left:386px;top:183px;">deg. F</div>
<div class="t" style="left:243px;top:211px;">End Valu<u>e</u>:</div>
<div style="left:301px;top:205px;width:74px;height:21px;background:#FFFFFF;"></div>
<div style="left:301px;top:205px;width:74px;height:1px;background:#848484;"></div>
<div style="left:301px;top:205px;width:1px;height:21px;background:#848484;"></div>
<div style="left:302px;top:206px;width:72px;height:1px;background:#424242;"></div>
<div style="left:302px;top:206px;width:1px;height:19px;background:#424242;"></div>
<div style="left:302px;top:224px;width:72px;height:1px;background:#D6D6CE;"></div>
<div style="left:373px;top:206px;width:1px;height:19px;background:#D6D6CE;"></div>
<div style="left:301px;top:225px;width:74px;height:1px;background:#FFFFFF;"></div>
<div style="left:374px;top:205px;width:1px;height:21px;background:#FFFFFF;"></div>
<div class="t" style="left:304px;top:209px;">600</div>
<div class="t" style="left:384px;top:211px;">I<u>n</u>crement:</div>
<div style="left:442px;top:205px;width:74px;height:21px;background:#FFFFFF;"></div>
<div style="left:442px;top:205px;width:74px;height:1px;background:#848484;"></div>
<div style="left:442px;top:205px;width:1px;height:21px;background:#848484;"></div>
<div style="left:443px;top:206px;width:72px;height:1px;background:#424242;"></div>
<div style="left:443px;top:206px;width:1px;height:19px;background:#424242;"></div>
<div style="left:443px;top:224px;width:72px;height:1px;background:#D6D6CE;"></div>
<div style="left:514px;top:206px;width:1px;height:19px;background:#D6D6CE;"></div>
<div style="left:442px;top:225px;width:74px;height:1px;background:#FFFFFF;"></div>
<div style="left:515px;top:205px;width:1px;height:21px;background:#FFFFFF;"></div>
<div class="t" style="left:445px;top:209px;">20</div>
<div style="left:538px;top:185px;width:79px;height:43px;background:#000000;"></div>
<div style="left:539px;top:186px;width:77px;height:41px;background:#424242;"></div>
<div style="left:539px;top:186px;width:76px;height:40px;background:#FFFFFF;"></div>
<div style="left:540px;top:187px;width:75px;height:39px;background:#848484;"></div>
<div style="left:540px;top:187px;width:74px;height:38px;background:#D6D6CE;"></div>
<div style="left:542px;top:189px;width:71px;height:35px;border:1px dotted #000;"></div>
<svg style="left:569px;top:192px" width="16" height="13" viewBox="0 0 16 13">
<path fill="#000" d="M1 0h14v1h-14zM0 1h16v11h-16zM1 12h14v1h-14z"/>
<rect x="1" y="1" width="14" height="11" fill="#008284"/>
<rect x="2" y="2" width="9" height="4" fill="#000"/>
<rect x="3" y="3" width="7" height="2" fill="#fff"/>
<path fill="#000" d="M2 6h2v2h-2zM5 6h2v2h-2zM8 6h2v2h-2zM11 6h2v2h-2zM2 9h2v2h-2zM5 9h2v2h-2zM8 9h2v2h-2zM11 9h2v2h-2z"/>
<path fill="#fff" d="M2 6h1v1h-1zM5 6h1v1h-1zM8 6h1v1h-1zM11 6h1v1h-1zM2 9h1v1h-1zM5 9h1v1h-1zM8 9h1v1h-1zM11 9h1v1h-1z"/>
</svg>
<div class="t" style="left:555px;top:212px;"><u>C</u>alculate</div>
<div style="left:31px;top:250px;width:600px;height:1px;background:#848484;"></div>
<div style="left:31px;top:250px;width:1px;height:294px;background:#848484;"></div>
<div style="left:32px;top:251px;width:598px;height:1px;background:#424242;"></div>
<div style="left:32px;top:251px;width:1px;height:292px;background:#424242;"></div>
<div style="left:32px;top:542px;width:598px;height:1px;background:#D6D6CE;"></div>
<div style="left:629px;top:251px;width:1px;height:292px;background:#D6D6CE;"></div>
<div style="left:31px;top:543px;width:600px;height:1px;background:#FFFFFF;"></div>
<div style="left:630px;top:250px;width:1px;height:294px;background:#FFFFFF;"></div>
<div style="left:33px;top:252px;width:580px;height:274px;overflow:hidden;background:#fff;">
<div style="left:-33px;top:-252px;width:663px;height:573px;">
<div style="left:33px;top:252px;width:668px;height:32px;background:#D6D6CE;"></div>
<div style="left:33px;top:283px;width:668px;height:1px;background:#848484;"></div>
<div style="left:33px;top:252px;width:1px;height:31px;background:#FFFFFF;"></div>
<div style="left:104px;top:252px;width:1px;height:32px;background:#848484;"></div>
<div style="left:104px;top:284px;width:1px;height:277px;background:#848484;"></div>
<div style="left:105px;top:252px;width:1px;height:31px;background:#FFFFFF;"></div>
<div style="left:146px;top:252px;width:1px;height:32px;background:#848484;"></div>
<div style="left:146px;top:284px;width:1px;height:277px;background:#D6D6CE;"></div>
<div style="left:147px;top:252px;width:1px;height:31px;background:#FFFFFF;"></div>
<div style="left:199px;top:252px;width:1px;height:32px;background:#848484;"></div>
<div style="left:199px;top:284px;width:1px;height:277px;background:#D6D6CE;"></div>
<div style="left:200px;top:252px;width:1px;height:31px;background:#FFFFFF;"></div>
<div style="left:254px;top:252px;width:1px;height:32px;background:#848484;"></div>
<div style="left:254px;top:284px;width:1px;height:277px;background:#D6D6CE;"></div>
<div style="left:255px;top:252px;width:1px;height:31px;background:#FFFFFF;"></div>
<div style="left:320px;top:252px;width:1px;height:32px;background:#848484;"></div>
<div style="left:320px;top:284px;width:1px;height:277px;background:#D6D6CE;"></div>
<div style="left:321px;top:252px;width:1px;height:31px;background:#FFFFFF;"></div>
<div style="left:371px;top:252px;width:1px;height:32px;background:#848484;"></div>
<div style="left:371px;top:284px;width:1px;height:277px;background:#D6D6CE;"></div>
<div style="left:372px;top:252px;width:1px;height:31px;background:#FFFFFF;"></div>
<div style="left:465px;top:252px;width:1px;height:32px;background:#848484;"></div>
<div style="left:465px;top:284px;width:1px;height:277px;background:#D6D6CE;"></div>
<div style="left:466px;top:252px;width:1px;height:31px;background:#FFFFFF;"></div>
<div style="left:522px;top:252px;width:1px;height:32px;background:#848484;"></div>
<div style="left:522px;top:284px;width:1px;height:277px;background:#D6D6CE;"></div>
<div style="left:523px;top:252px;width:1px;height:31px;background:#FFFFFF;"></div>
<div style="left:603px;top:252px;width:1px;height:32px;background:#848484;"></div>
<div style="left:603px;top:284px;width:1px;height:277px;background:#D6D6CE;"></div>
<div style="left:604px;top:252px;width:1px;height:31px;background:#FFFFFF;"></div>
<div style="left:690px;top:252px;width:1px;height:32px;background:#848484;"></div>
<div style="left:690px;top:284px;width:1px;height:277px;background:#D6D6CE;"></div>
<div style="left:33px;top:252px;width:668px;height:1px;background:#FFFFFF;"></div>
<div style="left:33px;top:284px;width:71px;height:15px;background:#D6D6CE;"></div>
<div style="left:33px;top:284px;width:71px;height:1px;background:#FFFFFF;"></div>
<div style="left:33px;top:284px;width:1px;height:16px;background:#FFFFFF;"></div>
<div style="left:33px;top:299px;width:72px;height:1px;background:#848484;"></div>
<div style="left:105px;top:299px;width:596px;height:1px;background:#D6D6CE;"></div>
<div style="left:33px;top:300px;width:71px;height:15px;background:#D6D6CE;"></div>
<div style="left:33px;top:300px;width:71px;height:1px;background:#FFFFFF;"></div>
<div style="left:33px;top:300px;width:1px;height:16px;background:#FFFFFF;"></div>
<div style="left:33px;top:315px;width:72px;height:1px;background:#848484;"></div>
<div style="left:105px;top:315px;width:596px;height:1px;background:#D6D6CE;"></div>
<div style="left:33px;top:316px;width:71px;height:15px;background:#D6D6CE;"></div>
<div style="left:33px;top:316px;width:71px;height:1px;background:#FFFFFF;"></div>
<div style="left:33px;top:316px;width:1px;height:16px;background:#FFFFFF;"></div>
<div style="left:33px;top:331px;width:72px;height:1px;background:#848484;"></div>
<div style="left:105px;top:331px;width:596px;height:1px;background:#D6D6CE;"></div>
<div style="left:33px;top:332px;width:71px;height:15px;background:#D6D6CE;"></div>
<div style="left:33px;top:332px;width:71px;height:1px;background:#FFFFFF;"></div>
<div style="left:33px;top:332px;width:1px;height:16px;background:#FFFFFF;"></div>
<div style="left:33px;top:347px;width:72px;height:1px;background:#848484;"></div>
<div style="left:105px;top:347px;width:596px;height:1px;background:#D6D6CE;"></div>
<div style="left:33px;top:348px;width:71px;height:15px;background:#D6D6CE;"></div>
<div style="left:33px;top:348px;width:71px;height:1px;background:#FFFFFF;"></div>
<div style="left:33px;top:348px;width:1px;height:16px;background:#FFFFFF;"></div>
<div style="left:33px;top:363px;width:72px;height:1px;background:#848484;"></div>
<div style="left:105px;top:363px;width:596px;height:1px;background:#D6D6CE;"></div>
<div style="left:33px;top:364px;width:71px;height:15px;background:#D6D6CE;"></div>
<div style="left:33px;top:364px;width:71px;height:1px;background:#FFFFFF;"></div>
<div style="left:33px;top:364px;width:1px;height:16px;background:#FFFFFF;"></div>
<div style="left:33px;top:379px;width:72px;height:1px;background:#848484;"></div>
<div style="left:105px;top:379px;width:596px;height:1px;background:#D6D6CE;"></div>
<div style="left:33px;top:380px;width:71px;height:15px;background:#D6D6CE;"></div>
<div style="left:33px;top:380px;width:71px;height:1px;background:#FFFFFF;"></div>
<div style="left:33px;top:380px;width:1px;height:16px;background:#FFFFFF;"></div>
<div style="left:33px;top:395px;width:72px;height:1px;background:#848484;"></div>
<div style="left:105px;top:395px;width:596px;height:1px;background:#D6D6CE;"></div>
<div style="left:33px;top:396px;width:71px;height:15px;background:#D6D6CE;"></div>
<div style="left:33px;top:396px;width:71px;height:1px;background:#FFFFFF;"></div>
<div style="left:33px;top:396px;width:1px;height:16px;background:#FFFFFF;"></div>
<div style="left:33px;top:411px;width:72px;height:1px;background:#848484;"></div>
<div style="left:105px;top:411px;width:596px;height:1px;background:#D6D6CE;"></div>
<div style="left:33px;top:412px;width:71px;height:15px;background:#D6D6CE;"></div>
<div style="left:33px;top:412px;width:71px;height:1px;background:#FFFFFF;"></div>
<div style="left:33px;top:412px;width:1px;height:16px;background:#FFFFFF;"></div>
<div style="left:33px;top:427px;width:72px;height:1px;background:#848484;"></div>
<div style="left:105px;top:427px;width:596px;height:1px;background:#D6D6CE;"></div>
<div style="left:33px;top:428px;width:71px;height:15px;background:#D6D6CE;"></div>
<div style="left:33px;top:428px;width:71px;height:1px;background:#FFFFFF;"></div>
<div style="left:33px;top:428px;width:1px;height:16px;background:#FFFFFF;"></div>
<div style="left:33px;top:443px;width:72px;height:1px;background:#848484;"></div>
<div style="left:105px;top:443px;width:596px;height:1px;background:#D6D6CE;"></div>
<div style="left:33px;top:444px;width:71px;height:15px;background:#D6D6CE;"></div>
<div style="left:33px;top:444px;width:71px;height:1px;background:#FFFFFF;"></div>
<div style="left:33px;top:444px;width:1px;height:16px;background:#FFFFFF;"></div>
<div style="left:33px;top:459px;width:72px;height:1px;background:#848484;"></div>
<div style="left:105px;top:459px;width:596px;height:1px;background:#D6D6CE;"></div>
<div style="left:33px;top:460px;width:71px;height:15px;background:#D6D6CE;"></div>
<div style="left:33px;top:460px;width:71px;height:1px;background:#FFFFFF;"></div>
<div style="left:33px;top:460px;width:1px;height:16px;background:#FFFFFF;"></div>
<div style="left:33px;top:475px;width:72px;height:1px;background:#848484;"></div>
<div style="left:105px;top:475px;width:596px;height:1px;background:#D6D6CE;"></div>
<div style="left:33px;top:476px;width:71px;height:15px;background:#D6D6CE;"></div>
<div style="left:33px;top:476px;width:71px;height:1px;background:#FFFFFF;"></div>
<div style="left:33px;top:476px;width:1px;height:16px;background:#FFFFFF;"></div>
<div style="left:33px;top:491px;width:72px;height:1px;background:#848484;"></div>
<div style="left:105px;top:491px;width:596px;height:1px;background:#D6D6CE;"></div>
<div style="left:33px;top:492px;width:71px;height:15px;background:#D6D6CE;"></div>
<div style="left:33px;top:492px;width:71px;height:1px;background:#FFFFFF;"></div>
<div style="left:33px;top:492px;width:1px;height:16px;background:#FFFFFF;"></div>
<div style="left:33px;top:507px;width:72px;height:1px;background:#848484;"></div>
<div style="left:105px;top:507px;width:596px;height:1px;background:#D6D6CE;"></div>
<div style="left:33px;top:508px;width:71px;height:15px;background:#D6D6CE;"></div>
<div style="left:33px;top:508px;width:71px;height:1px;background:#FFFFFF;"></div>
<div style="left:33px;top:508px;width:1px;height:16px;background:#FFFFFF;"></div>
<div style="left:33px;top:523px;width:72px;height:1px;background:#848484;"></div>
<div style="left:105px;top:523px;width:596px;height:1px;background:#D6D6CE;"></div>
<div style="left:33px;top:524px;width:71px;height:15px;background:#D6D6CE;"></div>
<div style="left:33px;top:524px;width:71px;height:1px;background:#FFFFFF;"></div>
<div style="left:33px;top:524px;width:1px;height:16px;background:#FFFFFF;"></div>
<div style="left:33px;top:539px;width:72px;height:1px;background:#848484;"></div>
<div style="left:105px;top:539px;width:596px;height:1px;background:#D6D6CE;"></div>
<div style="left:33px;top:540px;width:71px;height:15px;background:#D6D6CE;"></div>
<div style="left:33px;top:540px;width:71px;height:1px;background:#FFFFFF;"></div>
<div style="left:33px;top:540px;width:1px;height:16px;background:#FFFFFF;"></div>
<div style="left:33px;top:555px;width:72px;height:1px;background:#848484;"></div>
<div style="left:105px;top:555px;width:596px;height:1px;background:#D6D6CE;"></div>
<div class="t" style="left:33px;top:256px;width:71px;text-align:center;transform-origin:50% 0;">Temperature</div>
<div class="t" style="left:33px;top:270px;width:71px;text-align:center;transform-origin:50% 0;">(deg. F)</div>
<div class="t" style="left:105px;top:262px;width:41px;text-align:center;transform-origin:50% 0;">Phase</div>
<div class="t" style="left:147px;top:256px;width:52px;text-align:center;transform-origin:50% 0;">Pressure</div>
<div class="t" style="left:147px;top:270px;width:52px;text-align:center;transform-origin:50% 0;">(psia)</div>
<div class="t" style="left:200px;top:256px;width:54px;text-align:center;transform-origin:50% 0;">Enthalpy</div>
<div class="t" style="left:200px;top:270px;width:54px;text-align:center;transform-origin:50% 0;">(Btu/lbm)</div>
<div class="t" style="left:255px;top:256px;width:65px;text-align:center;transform-origin:50% 0;">Entropy</div>
<div class="t" style="left:255px;top:270px;width:65px;text-align:center;transform-origin:50% 0;">(Btu/lbm-R)</div>
<div class="t" style="left:321px;top:256px;width:50px;text-align:center;transform-origin:50% 0;">Density</div>
<div class="t" style="left:321px;top:270px;width:50px;text-align:center;transform-origin:50% 0;">(lbm/ft3)</div>
<div class="t" style="left:372px;top:256px;width:93px;text-align:center;transform-origin:50% 0;">Specific Heat, cp</div>
<div class="t" style="left:372px;top:270px;width:93px;text-align:center;transform-origin:50% 0;">(Btu/lbm-R)</div>
<div class="t" style="left:466px;top:256px;width:56px;text-align:center;transform-origin:50% 0;">Viscosity</div>
<div class="t" style="left:466px;top:270px;width:56px;text-align:center;transform-origin:50% 0;">(lbm/hr-ft)</div>
<div class="t" style="left:523px;top:256px;width:80px;text-align:center;transform-origin:50% 0;">Thermal Cond.</div>
<div class="t" style="left:523px;top:270px;width:80px;text-align:center;transform-origin:50% 0;">(Btu/hr-ft-R)</div>
<div class="t" style="left:610px;top:270px;">(Btu/lbm)</div>
<div class="t" style="left:34px;top:286px;width:71px;text-align:center;transform-origin:50% 0;">= 200</div>
<div class="t" style="left:105px;top:286px;width:40px;text-align:right;transform-origin:100% 0;">Liquid</div>
<div class="t" style="left:147px;top:286px;width:51px;text-align:right;transform-origin:100% 0;">100.0</div>
<div class="t" style="left:200px;top:286px;width:53px;text-align:right;transform-origin:100% 0;">168.3</div>
<div class="t" style="left:255px;top:286px;width:64px;text-align:right;transform-origin:100% 0;">0.2939</div>
<div class="t" style="left:321px;top:286px;width:49px;text-align:right;transform-origin:100% 0;">60.1381</div>
<div class="t" style="left:372px;top:286px;width:92px;text-align:right;transform-origin:100% 0;">1.0049</div>
<div class="t" style="left:466px;top:286px;width:55px;text-align:right;transform-origin:100% 0;">0.73290</div>
<div class="t" style="left:523px;top:286px;width:79px;text-align:right;transform-origin:100% 0;">0.39030</div>
<div class="t" style="left:604px;top:286px;width:85px;text-align:right;transform-origin:100% 0;">1.866</div>
<div class="t" style="left:34px;top:302px;width:71px;text-align:center;transform-origin:50% 0;">= 220</div>
<div class="t" style="left:105px;top:302px;width:40px;text-align:right;transform-origin:100% 0;">Liquid</div>
<div class="t" style="left:147px;top:302px;width:51px;text-align:right;transform-origin:100% 0;">100.0</div>
<div class="t" style="left:200px;top:302px;width:53px;text-align:right;transform-origin:100% 0;">188.4</div>
<div class="t" style="left:255px;top:302px;width:64px;text-align:right;transform-origin:100% 0;">0.3240</div>
<div class="t" style="left:321px;top:302px;width:49px;text-align:right;transform-origin:100% 0;">59.6430</div>
<div class="t" style="left:372px;top:302px;width:92px;text-align:right;transform-origin:100% 0;">1.0082</div>
<div class="t" style="left:466px;top:302px;width:55px;text-align:right;transform-origin:100% 0;">0.65138</div>
<div class="t" style="left:523px;top:302px;width:79px;text-align:right;transform-origin:100% 0;">0.39304</div>
<div class="t" style="left:604px;top:302px;width:85px;text-align:right;transform-origin:100% 0;">1.671</div>
<div class="t" style="left:34px;top:318px;width:71px;text-align:center;transform-origin:50% 0;">= 240</div>
<div class="t" style="left:105px;top:318px;width:40px;text-align:right;transform-origin:100% 0;">Liquid</div>
<div class="t" style="left:147px;top:318px;width:51px;text-align:right;transform-origin:100% 0;">100.0</div>
<div class="t" style="left:200px;top:318px;width:53px;text-align:right;transform-origin:100% 0;">208.6</div>
<div class="t" style="left:255px;top:318px;width:64px;text-align:right;transform-origin:100% 0;">0.3533</div>
<div class="t" style="left:321px;top:318px;width:49px;text-align:right;transform-origin:100% 0;">59.1130</div>
<div class="t" style="left:372px;top:318px;width:92px;text-align:right;transform-origin:100% 0;">1.0122</div>
<div class="t" style="left:466px;top:318px;width:55px;text-align:right;transform-origin:100% 0;">0.58487</div>
<div class="t" style="left:523px;top:318px;width:79px;text-align:right;transform-origin:100% 0;">0.39491</div>
<div class="t" style="left:604px;top:318px;width:85px;text-align:right;transform-origin:100% 0;">1.499</div>
<div class="t" style="left:34px;top:334px;width:71px;text-align:center;transform-origin:50% 0;">= 260</div>
<div class="t" style="left:105px;top:334px;width:40px;text-align:right;transform-origin:100% 0;">Liquid</div>
<div class="t" style="left:147px;top:334px;width:51px;text-align:right;transform-origin:100% 0;">100.0</div>
<div class="t" style="left:200px;top:334px;width:53px;text-align:right;transform-origin:100% 0;">228.9</div>
<div class="t" style="left:255px;top:334px;width:64px;text-align:right;transform-origin:100% 0;">0.3819</div>
<div class="t" style="left:321px;top:334px;width:49px;text-align:right;transform-origin:100% 0;">58.5490</div>
<div class="t" style="left:372px;top:334px;width:92px;text-align:right;transform-origin:100% 0;">1.0168</div>
<div class="t" style="left:466px;top:334px;width:55px;text-align:right;transform-origin:100% 0;">0.52991</div>
<div class="t" style="left:523px;top:334px;width:79px;text-align:right;transform-origin:100% 0;">0.39593</div>
<div class="t" style="left:604px;top:334px;width:85px;text-align:right;transform-origin:100% 0;">1.361</div>
<div class="t" style="left:34px;top:350px;width:71px;text-align:center;transform-origin:50% 0;">= 280</div>
<div class="t" style="left:105px;top:350px;width:40px;text-align:right;transform-origin:100% 0;">Liquid</div>
<div class="t" style="left:147px;top:350px;width:51px;text-align:right;transform-origin:100% 0;">100.0</div>
<div class="t" style="left:200px;top:350px;width:53px;text-align:right;transform-origin:100% 0;">249.3</div>
<div class="t" style="left:255px;top:350px;width:64px;text-align:right;transform-origin:100% 0;">0.4098</div>
<div class="t" style="left:321px;top:350px;width:49px;text-align:right;transform-origin:100% 0;">57.9513</div>
<div class="t" style="left:372px;top:350px;width:92px;text-align:right;transform-origin:100% 0;">1.0223</div>
<div class="t" style="left:466px;top:350px;width:55px;text-align:right;transform-origin:100% 0;">0.48394</div>
<div class="t" style="left:523px;top:350px;width:79px;text-align:right;transform-origin:100% 0;">0.39615</div>
<div class="t" style="left:604px;top:350px;width:85px;text-align:right;transform-origin:100% 0;">1.249</div>
<div class="t" style="left:34px;top:366px;width:71px;text-align:center;transform-origin:50% 0;">= 300</div>
<div class="t" style="left:105px;top:366px;width:40px;text-align:right;transform-origin:100% 0;">Liquid</div>
<div class="t" style="left:147px;top:366px;width:51px;text-align:right;transform-origin:100% 0;">100.0</div>
<div class="t" style="left:200px;top:366px;width:53px;text-align:right;transform-origin:100% 0;">269.8</div>
<div class="t" style="left:255px;top:366px;width:64px;text-align:right;transform-origin:100% 0;">0.4372</div>
<div class="t" style="left:321px;top:366px;width:49px;text-align:right;transform-origin:100% 0;">57.3195</div>
<div class="t" style="left:372px;top:366px;width:92px;text-align:right;transform-origin:100% 0;">1.0286</div>
<div class="t" style="left:466px;top:366px;width:55px;text-align:right;transform-origin:100% 0;">0.44507</div>
<div class="t" style="left:523px;top:366px;width:79px;text-align:right;transform-origin:100% 0;">0.39558</div>
<div class="t" style="left:604px;top:366px;width:85px;text-align:right;transform-origin:100% 0;">1.157</div>
<div class="t" style="left:34px;top:382px;width:71px;text-align:center;transform-origin:50% 0;">= 320</div>
<div class="t" style="left:105px;top:382px;width:40px;text-align:right;transform-origin:100% 0;">Liquid</div>
<div class="t" style="left:147px;top:382px;width:51px;text-align:right;transform-origin:100% 0;">100.0</div>
<div class="t" style="left:200px;top:382px;width:53px;text-align:right;transform-origin:100% 0;">290.5</div>
<div class="t" style="left:255px;top:382px;width:64px;text-align:right;transform-origin:100% 0;">0.4640</div>
<div class="t" style="left:321px;top:382px;width:49px;text-align:right;transform-origin:100% 0;">56.6530</div>
<div class="t" style="left:372px;top:382px;width:92px;text-align:right;transform-origin:100% 0;">1.0360</div>
<div class="t" style="left:466px;top:382px;width:55px;text-align:right;transform-origin:100% 0;">0.41187</div>
<div class="t" style="left:523px;top:382px;width:79px;text-align:right;transform-origin:100% 0;">0.39423</div>
<div class="t" style="left:604px;top:382px;width:85px;text-align:right;transform-origin:100% 0;">1.082</div>
<div class="t" style="left:34px;top:398px;width:71px;text-align:center;transform-origin:50% 0;">= 340</div>
<div class="t" style="left:105px;top:398px;width:40px;text-align:right;transform-origin:100% 0;">Gas</div>
<div class="t" style="left:147px;top:398px;width:51px;text-align:right;transform-origin:100% 0;">100.0</div>
<div class="t" style="left:200px;top:398px;width:53px;text-align:right;transform-origin:100% 0;">1194.7</div>
<div class="t" style="left:255px;top:398px;width:64px;text-align:right;transform-origin:100% 0;">1.6123</div>
<div class="t" style="left:321px;top:398px;width:49px;text-align:right;transform-origin:100% 0;">0.2212</div>
<div class="t" style="left:372px;top:398px;width:92px;text-align:right;transform-origin:100% 0;">0.5805</div>
<div class="t" style="left:466px;top:398px;width:55px;text-align:right;transform-origin:100% 0;">0.03574</div>
<div class="t" style="left:523px;top:398px;width:79px;text-align:right;transform-origin:100% 0;">0.01915</div>
<div class="t" style="left:604px;top:398px;width:85px;text-align:right;transform-origin:100% 0;">1.083</div>
<div class="t" style="left:34px;top:414px;width:71px;text-align:center;transform-origin:50% 0;">= 360</div>
<div class="t" style="left:105px;top:414px;width:40px;text-align:right;transform-origin:100% 0;">Gas</div>
<div class="t" style="left:147px;top:414px;width:51px;text-align:right;transform-origin:100% 0;">100.0</div>
<div class="t" style="left:200px;top:414px;width:53px;text-align:right;transform-origin:100% 0;">1206.1</div>
<div class="t" style="left:255px;top:414px;width:64px;text-align:right;transform-origin:100% 0;">1.6263</div>
<div class="t" style="left:321px;top:414px;width:49px;text-align:right;transform-origin:100% 0;">0.2145</div>
<div class="t" style="left:372px;top:414px;width:92px;text-align:right;transform-origin:100% 0;">0.5568</div>
<div class="t" style="left:466px;top:414px;width:55px;text-align:right;transform-origin:100% 0;">0.03687</div>
<div class="t" style="left:523px;top:414px;width:79px;text-align:right;transform-origin:100% 0;">0.01947</div>
<div class="t" style="left:604px;top:414px;width:85px;text-align:right;transform-origin:100% 0;">1.054</div>
<div class="t" style="left:34px;top:430px;width:71px;text-align:center;transform-origin:50% 0;">= 380</div>
<div class="t" style="left:105px;top:430px;width:40px;text-align:right;transform-origin:100% 0;">Gas</div>
<div class="t" style="left:147px;top:430px;width:51px;text-align:right;transform-origin:100% 0;">100.0</div>
<div class="t" style="left:200px;top:430px;width:53px;text-align:right;transform-origin:100% 0;">1217.0</div>
<div class="t" style="left:255px;top:430px;width:64px;text-align:right;transform-origin:100% 0;">1.6395</div>
<div class="t" style="left:321px;top:430px;width:49px;text-align:right;transform-origin:100% 0;">0.2083</div>
<div class="t" style="left:372px;top:430px;width:92px;text-align:right;transform-origin:100% 0;">0.5421</div>
<div class="t" style="left:466px;top:430px;width:55px;text-align:right;transform-origin:100% 0;">0.03801</div>
<div class="t" style="left:523px;top:430px;width:79px;text-align:right;transform-origin:100% 0;">0.01987</div>
<div class="t" style="left:604px;top:430px;width:85px;text-align:right;transform-origin:100% 0;">1.037</div>
<div class="t" style="left:34px;top:446px;width:71px;text-align:center;transform-origin:50% 0;">= 400</div>
<div class="t" style="left:105px;top:446px;width:40px;text-align:right;transform-origin:100% 0;">Gas</div>
<div class="t" style="left:147px;top:446px;width:51px;text-align:right;transform-origin:100% 0;">100.0</div>
<div class="t" style="left:200px;top:446px;width:53px;text-align:right;transform-origin:100% 0;">1227.8</div>
<div class="t" style="left:255px;top:446px;width:64px;text-align:right;transform-origin:100% 0;">1.6521</div>
<div class="t" style="left:321px;top:446px;width:49px;text-align:right;transform-origin:100% 0;">0.2026</div>
<div class="t" style="left:372px;top:446px;width:92px;text-align:right;transform-origin:100% 0;">0.5314</div>
<div class="t" style="left:466px;top:446px;width:55px;text-align:right;transform-origin:100% 0;">0.03914</div>
<div class="t" style="left:523px;top:446px;width:79px;text-align:right;transform-origin:100% 0;">0.02033</div>
<div class="t" style="left:604px;top:446px;width:85px;text-align:right;transform-origin:100% 0;">1.023</div>
<div class="t" style="left:34px;top:462px;width:71px;text-align:center;transform-origin:50% 0;">= 420</div>
<div class="t" style="left:105px;top:462px;width:40px;text-align:right;transform-origin:100% 0;">Gas</div>
<div class="t" style="left:147px;top:462px;width:51px;text-align:right;transform-origin:100% 0;">100.0</div>
<div class="t" style="left:200px;top:462px;width:53px;text-align:right;transform-origin:100% 0;">1238.3</div>
<div class="t" style="left:255px;top:462px;width:64px;text-align:right;transform-origin:100% 0;">1.6643</div>
<div class="t" style="left:321px;top:462px;width:49px;text-align:right;transform-origin:100% 0;">0.1973</div>
<div class="t" style="left:372px;top:462px;width:92px;text-align:right;transform-origin:100% 0;">0.5232</div>
<div class="t" style="left:466px;top:462px;width:55px;text-align:right;transform-origin:100% 0;">0.04028</div>
<div class="t" style="left:523px;top:462px;width:79px;text-align:right;transform-origin:100% 0;">0.02084</div>
<div class="t" style="left:604px;top:462px;width:85px;text-align:right;transform-origin:100% 0;">1.012</div>
<div class="t" style="left:34px;top:478px;width:71px;text-align:center;transform-origin:50% 0;">= 440</div>
<div class="t" style="left:105px;top:478px;width:40px;text-align:right;transform-origin:100% 0;">Gas</div>
<div class="t" style="left:147px;top:478px;width:51px;text-align:right;transform-origin:100% 0;">100.0</div>
<div class="t" style="left:200px;top:478px;width:53px;text-align:right;transform-origin:100% 0;">1248.7</div>
<div class="t" style="left:255px;top:478px;width:64px;text-align:right;transform-origin:100% 0;">1.6759</div>
<div class="t" style="left:321px;top:478px;width:49px;text-align:right;transform-origin:100% 0;">0.1923</div>
<div class="t" style="left:372px;top:478px;width:92px;text-align:right;transform-origin:100% 0;">0.5168</div>
<div class="t" style="left:466px;top:478px;width:55px;text-align:right;transform-origin:100% 0;">0.04141</div>
<div class="t" style="left:523px;top:478px;width:79px;text-align:right;transform-origin:100% 0;">0.02139</div>
<div class="t" style="left:604px;top:478px;width:85px;text-align:right;transform-origin:100% 0;">1.000</div>
<div class="t" style="left:34px;top:494px;width:71px;text-align:center;transform-origin:50% 0;">= 460</div>
<div class="t" style="left:105px;top:494px;width:40px;text-align:right;transform-origin:100% 0;">Gas</div>
<div class="t" style="left:147px;top:494px;width:51px;text-align:right;transform-origin:100% 0;">100.0</div>
<div class="t" style="left:200px;top:494px;width:53px;text-align:right;transform-origin:100% 0;">1259.0</div>
<div class="t" style="left:255px;top:494px;width:64px;text-align:right;transform-origin:100% 0;">1.6873</div>
<div class="t" style="left:321px;top:494px;width:49px;text-align:right;transform-origin:100% 0;">0.1876</div>
<div class="t" style="left:372px;top:494px;width:92px;text-align:right;transform-origin:100% 0;">0.5119</div>
<div class="t" style="left:466px;top:494px;width:55px;text-align:right;transform-origin:100% 0;">0.04255</div>
<div class="t" style="left:523px;top:494px;width:79px;text-align:right;transform-origin:100% 0;">0.02196</div>
<div class="t" style="left:604px;top:494px;width:85px;text-align:right;transform-origin:100% 0;">0.992</div>
<div class="t" style="left:34px;top:510px;width:71px;text-align:center;transform-origin:50% 0;">= 480</div>
<div class="t" style="left:105px;top:510px;width:40px;text-align:right;transform-origin:100% 0;">Gas</div>
<div class="t" style="left:147px;top:510px;width:51px;text-align:right;transform-origin:100% 0;">100.0</div>
<div class="t" style="left:200px;top:510px;width:53px;text-align:right;transform-origin:100% 0;">1269.2</div>
<div class="t" style="left:255px;top:510px;width:64px;text-align:right;transform-origin:100% 0;">1.6982</div>
<div class="t" style="left:321px;top:510px;width:49px;text-align:right;transform-origin:100% 0;">0.1832</div>
<div class="t" style="left:372px;top:510px;width:92px;text-align:right;transform-origin:100% 0;">0.5081</div>
<div class="t" style="left:466px;top:510px;width:55px;text-align:right;transform-origin:100% 0;">0.04368</div>
<div class="t" style="left:523px;top:510px;width:79px;text-align:right;transform-origin:100% 0;">0.02256</div>
<div class="t" style="left:604px;top:510px;width:85px;text-align:right;transform-origin:100% 0;">0.984</div>
<div class="t" style="left:34px;top:526px;width:71px;text-align:center;transform-origin:50% 0;">= 500</div>
<div class="t" style="left:105px;top:526px;width:40px;text-align:right;transform-origin:100% 0;">Gas</div>
<div class="t" style="left:147px;top:526px;width:51px;text-align:right;transform-origin:100% 0;">100.0</div>
<div class="t" style="left:200px;top:526px;width:53px;text-align:right;transform-origin:100% 0;">1279.3</div>
<div class="t" style="left:255px;top:526px;width:64px;text-align:right;transform-origin:100% 0;">1.7088</div>
<div class="t" style="left:321px;top:526px;width:49px;text-align:right;transform-origin:100% 0;">0.1792</div>
<div class="t" style="left:372px;top:526px;width:92px;text-align:right;transform-origin:100% 0;">0.5052</div>
<div class="t" style="left:466px;top:526px;width:55px;text-align:right;transform-origin:100% 0;">0.04482</div>
<div class="t" style="left:523px;top:526px;width:79px;text-align:right;transform-origin:100% 0;">0.02317</div>
<div class="t" style="left:604px;top:526px;width:85px;text-align:right;transform-origin:100% 0;">0.977</div>
</div></div>
<div style="left:613px;top:252px;width:16px;height:16px;background:#D6D6CE;"></div>
<div style="left:613px;top:252px;width:16px;height:1px;background:#D6D6CE;"></div>
<div style="left:613px;top:252px;width:1px;height:16px;background:#D6D6CE;"></div>
<div style="left:614px;top:253px;width:14px;height:1px;background:#FFFFFF;"></div>
<div style="left:614px;top:253px;width:1px;height:14px;background:#FFFFFF;"></div>
<div style="left:614px;top:266px;width:14px;height:1px;background:#848484;"></div>
<div style="left:627px;top:253px;width:1px;height:14px;background:#848484;"></div>
<div style="left:613px;top:267px;width:16px;height:1px;background:#424242;"></div>
<div style="left:628px;top:252px;width:1px;height:16px;background:#424242;"></div>
<svg style="left:617px;top:258px" width="7" height="4" viewBox="0 0 7 4"><path fill="#000" d="M3 0h1v1h-1zM2 1h3v1h-3zM1 2h5v1h-5zM0 3h7v1h-7z"/></svg>
<div style="left:613px;top:268px;width:16px;height:174px;background:#D6D6CE;"></div>
<div style="left:613px;top:268px;width:16px;height:1px;background:#D6D6CE;"></div>
<div style="left:613px;top:268px;width:1px;height:174px;background:#D6D6CE;"></div>
<div style="left:614px;top:269px;width:14px;height:1px;background:#FFFFFF;"></div>
<div style="left:614px;top:269px;width:1px;height:172px;background:#FFFFFF;"></div>
<div style="left:614px;top:440px;width:14px;height:1px;background:#848484;"></div>
<div style="left:627px;top:269px;width:1px;height:172px;background:#848484;"></div>
<div style="left:613px;top:441px;width:16px;height:1px;background:#424242;"></div>
<div style="left:628px;top:268px;width:1px;height:174px;background:#424242;"></div>
<div style="left:613px;top:442px;width:16px;height:68px;background-color:#fff;background-image:repeating-conic-gradient(#D6D6CE 0 25%,#fff 0 50%);background-size:2px 2px;"></div>
<div style="left:613px;top:510px;width:16px;height:16px;background:#D6D6CE;"></div>
<div style="left:613px;top:510px;width:16px;height:1px;background:#D6D6CE;"></div>
<div style="left:613px;top:510px;width:1px;height:16px;background:#D6D6CE;"></div>
<div style="left:614px;top:511px;width:14px;height:1px;background:#FFFFFF;"></div>
<div style="left:614px;top:511px;width:1px;height:14px;background:#FFFFFF;"></div>
<div style="left:614px;top:524px;width:14px;height:1px;background:#848484;"></div>
<div style="left:627px;top:511px;width:1px;height:14px;background:#848484;"></div>
<div style="left:613px;top:525px;width:16px;height:1px;background:#424242;"></div>
<div style="left:628px;top:510px;width:1px;height:16px;background:#424242;"></div>
<svg style="left:617px;top:516px" width="7" height="4" viewBox="0 0 7 4"><path fill="#000" d="M0 0h7v1h-7zM1 1h5v1h-5zM2 2h3v1h-3zM3 3h1v1h-1z"/></svg>
<div style="left:33px;top:526px;width:580px;height:16px;background:#D6D6CE;"></div>
<div style="left:33px;top:526px;width:16px;height:16px;background:#D6D6CE;"></div>
<div style="left:33px;top:526px;width:16px;height:1px;background:#D6D6CE;"></div>
<div style="left:33px;top:526px;width:1px;height:16px;background:#D6D6CE;"></div>
<div style="left:34px;top:527px;width:14px;height:1px;background:#FFFFFF;"></div>
<div style="left:34px;top:527px;width:1px;height:14px;background:#FFFFFF;"></div>
<div style="left:34px;top:540px;width:14px;height:1px;background:#848484;"></div>
<div style="left:47px;top:527px;width:1px;height:14px;background:#848484;"></div>
<div style="left:33px;top:541px;width:16px;height:1px;background:#424242;"></div>
<div style="left:48px;top:526px;width:1px;height:16px;background:#424242;"></div>
<svg style="left:38px;top:530px" width="4" height="7" viewBox="0 0 4 7"><path fill="#000" d="M3 0h1v7h-1zM2 1h1v5h-1zM1 2h1v3h-1zM0 3h1v1h-1z"/></svg>
<div style="left:49px;top:526px;width:502px;height:16px;background:#D6D6CE;"></div>
<div style="left:49px;top:526px;width:502px;height:1px;background:#D6D6CE;"></div>
<div style="left:49px;top:526px;width:1px;height:16px;background:#D6D6CE;"></div>
<div style="left:50px;top:527px;width:500px;height:1px;background:#FFFFFF;"></div>
<div style="left:50px;top:527px;width:1px;height:14px;background:#FFFFFF;"></div>
<div style="left:50px;top:540px;width:500px;height:1px;background:#848484;"></div>
<div style="left:549px;top:527px;width:1px;height:14px;background:#848484;"></div>
<div style="left:49px;top:541px;width:502px;height:1px;background:#424242;"></div>
<div style="left:550px;top:526px;width:1px;height:16px;background:#424242;"></div>
<div style="left:551px;top:526px;width:46px;height:16px;background-color:#fff;background-image:repeating-conic-gradient(#D6D6CE 0 25%,#fff 0 50%);background-size:2px 2px;"></div>
<div style="left:597px;top:526px;width:16px;height:16px;background:#D6D6CE;"></div>
<div style="left:597px;top:526px;width:16px;height:1px;background:#D6D6CE;"></div>
<div style="left:597px;top:526px;width:1px;height:16px;background:#D6D6CE;"></div>
<div style="left:598px;top:527px;width:14px;height:1px;background:#FFFFFF;"></div>
<div style="left:598px;top:527px;width:1px;height:14px;background:#FFFFFF;"></div>
<div style="left:598px;top:540px;width:14px;height:1px;background:#848484;"></div>
<div style="left:611px;top:527px;width:1px;height:14px;background:#848484;"></div>
<div style="left:597px;top:541px;width:16px;height:1px;background:#424242;"></div>
<div style="left:612px;top:526px;width:1px;height:16px;background:#424242;"></div>
<svg style="left:603px;top:530px" width="4" height="7" viewBox="0 0 4 7"><path fill="#000" d="M0 0h1v7h-1zM1 1h1v5h-1zM2 2h1v3h-1zM3 3h1v1h-1z"/></svg>
<div style="left:613px;top:526px;width:16px;height:16px;background:#D6D6CE;"></div>
<div class="t" style="left:30px;top:551px;transform:scaleX(0.888);">Property Source:&nbsp; ASME Steam Tables (IAPWS-IF97)</div>
</body></html>
